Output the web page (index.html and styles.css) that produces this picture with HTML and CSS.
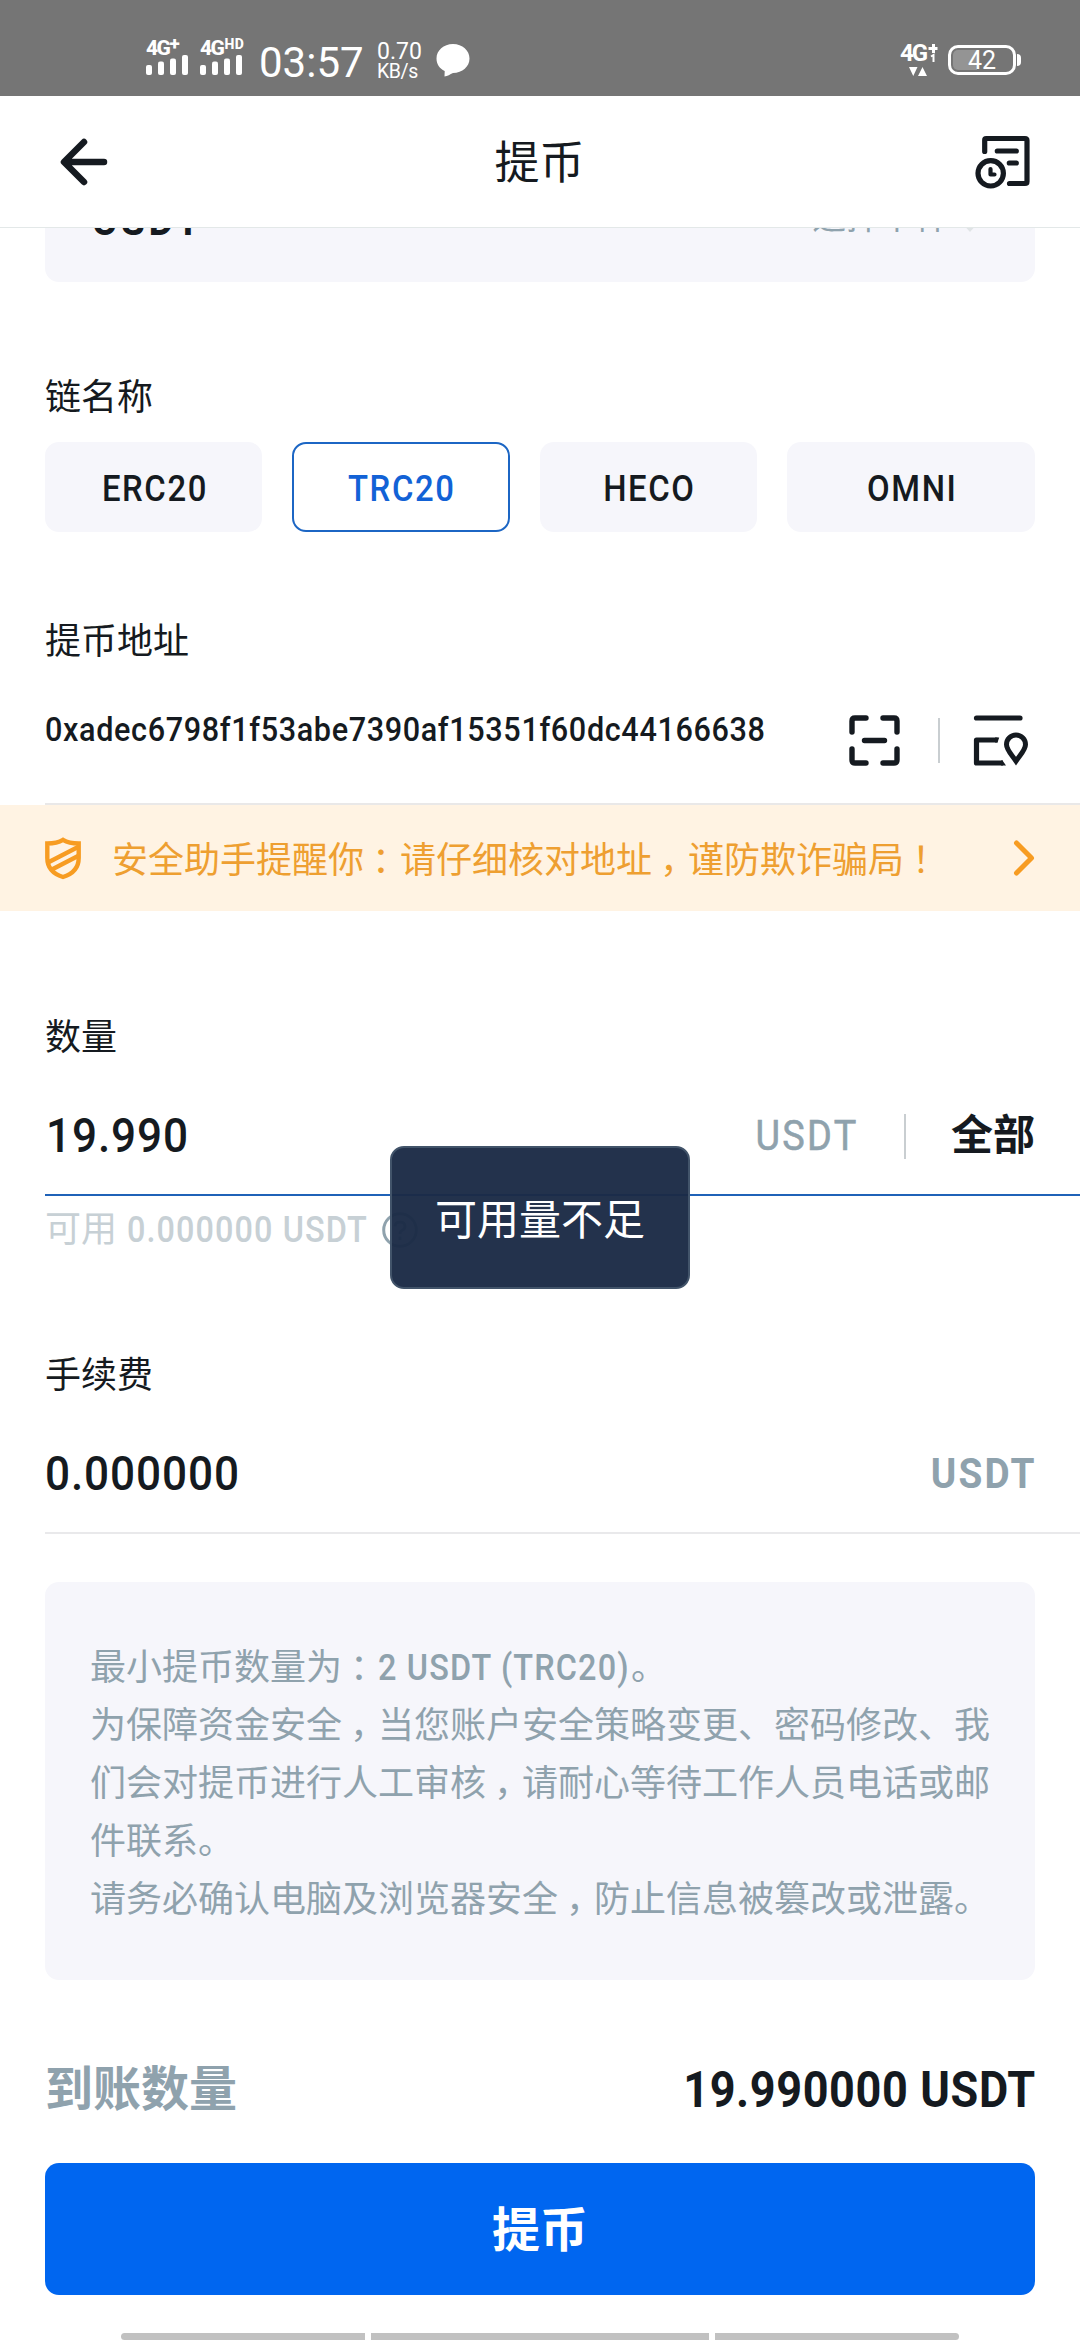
FILE: index.html
```html
<!DOCTYPE html>
<html lang="zh-CN">
<head>
<meta charset="utf-8">
<title>提币</title>
<link rel="stylesheet" href="styles.css">
</head>
<body>
<div class="screen">
  <div class="status">
    <div class="signal">
      <div class="net">4G<span class="plus">+</span></div>
      <svg width="42" height="20" viewBox="0 0 42 20" fill="#fff"><rect y="10" width="6" height="10" rx="2"/><rect x="12" y="6.500" width="6" height="13.500" rx="2"/><rect x="24" y="3.500" width="6" height="16.500" rx="2"/><rect x="36" y="0" width="6" height="20" rx="2"/></svg>
    </div>
    <div class="signal signal-hd">
      <div class="net">4G<span class="hd">HD</span></div>
      <svg width="42" height="20" viewBox="0 0 42 20" fill="#fff"><rect y="10" width="6" height="10" rx="2"/><rect x="12" y="6.500" width="6" height="13.500" rx="2"/><rect x="24" y="3.500" width="6" height="16.500" rx="2"/><rect x="36" y="0" width="6" height="20" rx="2"/></svg>
    </div>
    <div class="clock">03:57</div>
    <div class="speed"><span class="rate">0.70</span><span class="unit">KB/s</span></div>
    <svg class="bubble" width="34" height="33" viewBox="0 0 34 33" fill="#fff"><path d="M17 0C26.500 0 33.500 6.500 33.500 14.500S26.500 29 17 29C14 30.500 11.500 32 8.500 32.500L8.700 27C3.500 24.500 .5 20 .5 14.500C.5 6.500 7.500 0 17 0Z"/></svg>
    <div class="data">
      <div class="data-net">4G<svg width="10" height="19" viewBox="0 0 10 19" fill="none" stroke="#fff"><path d="M.5 4.500H9.500M5.500 0V9" stroke-width="3"/><path d="M3 12.500L5.500 11V18" stroke-width="2"/></svg></div>
      <svg width="18" height="9" viewBox="0 0 18 9" fill="#fff"><path d="M0 0H8.500L4.250 9ZM9 9H18L13.500 0Z"/></svg>
    </div>
    <div class="battery"><span>42</span></div>
    <div class="nub"></div>
  </div>

  <header class="header">
    <svg class="back" width="48" height="48" viewBox="0 0 48 48" fill="none" stroke="#151a20" stroke-width="6.500" stroke-linecap="round" stroke-linejoin="round"><path d="M24 4L4 24L24 44M5 24H44"/></svg>
    <h1>提币</h1>
    <svg class="history" width="56" height="54" viewBox="0 0 56 54" fill="none" stroke="#151a20" stroke-width="5.200" stroke-linecap="round" stroke-linejoin="round"><path d="M9.700 16.500V5Q9.700 3.500 11.200 3.500H50Q52 3.500 52 5.500V46.500Q52 48.500 50 48.500H34.500M22.300 16H41.300M34.300 28H41.300"/><circle cx="15.700" cy="38.300" r="12.700"/><path d="M15.500 34V39.500H19.500" stroke-width="4.200"/></svg>
  </header>

  <main class="page">
    <div class="coin"><span class="coin-name din">USDT</span><span class="coin-pick">选择币种<svg width="20" height="14" viewBox="0 0 20 14" fill="#e0e4e6"><path d="M2 3H18L10 12Z"/></svg></span></div>

    <h2 class="label chain-label">链名称</h2>
    <div class="chains">
      <button class="chain"><span class="din din-center">ERC20</span></button>
      <button class="chain active"><span class="din din-center">TRC20</span></button>
      <button class="chain"><span class="din din-center">HECO</span></button>
      <button class="chain"><span class="din din-center">OMNI</span></button>
    </div>

    <h2 class="label addr-label">提币地址</h2>
    <div class="addr-row">
      <span class="addr"><span class="din">0xadec6798f1f53abe7390af15351f60dc44166638</span></span>
      <svg class="scan" width="51" height="51" viewBox="0 0 51 51" fill="none" stroke="#151a20" stroke-width="5.400" stroke-linecap="round" stroke-linejoin="round"><path d="M3 17V6Q3 3 6 3H17M34 3H45Q48 3 48 6V17M48 34V45Q48 48 45 48H34M17 48H6Q3 48 3 45V34M15.500 25.500H35.500"/></svg>
      <span class="divider"></span>
      <svg class="book" width="56" height="52" viewBox="0 0 56 52" fill="none" stroke="#151a20" stroke-width="5.200"><path d="M3.500 4H47" stroke-linecap="round"/><path d="M24.500 26H3.500V49H30" stroke-linejoin="round"/><path d="M22 23.400H26.200L24.500 28.600H22ZM28 46.400H29.500L33 51.600H28Z" fill="#151a20" stroke="none"/><path d="M43 47C39 41 33.500 36 33.500 30.500A9.500 9.500 0 0 1 52.500 30.500C52.500 36 47 41 43 47Z" stroke-width="5"/></svg>
    </div>

    <div class="notice">
      <svg width="36" height="43" viewBox="0 0 36 43"><defs><clipPath id="shield"><path d="M3 6.500Q12 6.500 18 3.500Q24 6.500 33 6.500V21Q33 35 18 40Q3 35 3 21Z"/></clipPath></defs><path d="M2.300 6.500Q12 6.300 18 2.800Q24 6.300 33.700 6.500V21Q33.700 35 18 40Q2.300 35 2.300 21Z" fill="none" stroke="#f79c22" stroke-width="4.400"/><path clip-path="url(#shield)" d="M2 26L35 9M4 34L35 18" stroke="#f79c22" stroke-width="4.600"/></svg>
      <p>安全助手提醒你<span class="mid">：</span>请仔细核对地址<span class="mid">，</span>谨防欺诈骗局<span class="mid">！</span></p>
      <svg class="go" width="22" height="36" viewBox="0 0 22 36" fill="none" stroke="#f79c22" stroke-width="5" stroke-linecap="round" stroke-linejoin="round"><path d="M3.500 3L18.500 18L3.500 33"/></svg>
    </div>

    <h2 class="label amount-label">数量</h2>
    <div class="field field-active">
      <span class="value value-amount"><span class="din">19.990</span></span>
      <span class="unit-text din din-right">USDT</span>
      <span class="divider"></span>
      <span class="all">全部</span>
    </div>
    <div class="hint">可用 <span class="hint-num"><span class="din">0.000000 USDT</span></span><svg width="36" height="36" viewBox="0 0 36 36" fill="none" stroke="#8fa2ad" stroke-width="3"><circle cx="18" cy="18" r="16.300"/><path d="M13 14.500Q13 10 18 10T23 14.500Q23 17 20 18.500Q18 19.500 18 22M18 24.500V28"/></svg></div>

    <h2 class="label fee-label">手续费</h2>
    <div class="field">
      <span class="value"><span class="din">0.000000</span></span>
      <span class="unit-text unit-bold din din-right">USDT</span>
    </div>

    <div class="info">
      <p>最小提币数量为<span class="mid">：</span><span class="info-min"><span class="din">2 USDT (TRC20)</span></span>。</p>
      <p>为保障资金安全<span class="mid">，</span>当您账户安全策略变更、密码修改、我们会对提币进行人工审核<span class="mid">，</span>请耐心等待工作人员电话或邮件联系。</p>
      <p>请务必确认电脑及浏览器安全<span class="mid">，</span>防止信息被篡改或泄露。</p>
    </div>
  </main>

  <footer class="footer">
    <div class="total"><span class="total-label">到账数量</span><span class="total-value din din-right">19.990000 USDT</span></div>
    <button class="submit">提币</button>
    <div class="navbars"><i></i><i></i><i></i></div>
  </footer>

  <div class="toast">可用量不足</div>
</div>
</body>
</html>
```
FILE: styles.css
```css
* { box-sizing: border-box; margin: 0; padding: 0; }
body {
  width: 1080px;
  height: 2340px;
  background: #fff;
  color: #151a20;
  font-family: Roboto, "Noto Sans CJK SC", sans-serif;
  line-height: 1.2;
  overflow: hidden;
}
button { font: inherit; color: inherit; border: 0; }
svg { display: block; flex: none; }
.screen { position: relative; width: 1080px; height: 2340px; overflow: hidden; }

/* narrow, openly spaced latin text */
.din { display: inline-block; transform: scaleX(.9); transform-origin: 0 50%; white-space: nowrap; }
.din-center { transform-origin: 50% 50%; }
.din-right { transform-origin: 100% 50%; }

/* status bar */
.status {
  height: 96px;
  background: #757575;
  color: #fff;
  display: flex;
  align-items: flex-start;
  padding-left: 146px;
}
.signal { width: 54px; padding-top: 38px; }
.signal-hd { width: 59px; }
.net { display: flex; height: 17px; font-size: 21px; line-height: 20px; font-weight: 800; letter-spacing: -1.5px; }
.plus { font-size: 19px; line-height: 11px; }
.hd { font-size: 14px; line-height: 12px; letter-spacing: .5px; padding-left: 1px; }
.clock { width: 118px; font-size: 42px; line-height: 48px; padding-top: 39px; }
.speed { width: 59px; display: flex; flex-direction: column; padding-top: 40px; }
.rate { font-size: 23px; line-height: 23px; }
.unit { font-size: 19.500px; line-height: 17px; letter-spacing: -.4px; }
.bubble { margin-top: 44px; }
.data { margin-left: 430px; padding-top: 43px; width: 48px; display: flex; flex-direction: column; }
.data-net { display: flex; height: 24px; font-size: 24px; line-height: 21px; font-weight: 700; letter-spacing: -2px; }
.data-net svg { margin: 1px 0 0 2px; }
.data > svg { margin-left: 9px; }
.battery {
  width: 68px;
  height: 30px;
  margin-top: 45px;
  border: 3px solid #fff;
  border-radius: 10px;
  padding: 2px;
}
.battery span {
  display: block;
  height: 20px;
  border-radius: 5px;
  padding-left: 15px;
  background: linear-gradient(90deg, #949494 24px, transparent 24px);
  font-size: 25px;
  line-height: 21px;
}
.nub { width: 4px; height: 12px; margin: 54px 0 0 1px; background: #fff; border-radius: 0 4px 4px 0; }

/* header */
.header {
  height: 132px;
  border-bottom: 1px solid #e3e8e8;
  display: flex;
  align-items: center;
  padding: 0 49px 0 60px;
}
.header h1 { flex: 1; padding: 5px 4px 0 0; text-align: center; font-size: 45px; line-height: 60px; font-weight: 400; }
.history { margin-top: 1px; }

/* form */
.page { display: flex; flex-direction: column; clip-path: inset(0); }
.coin {
  height: 122px;
  margin: -68px 45px 0;
  padding: 0 55px 0 47px;
  background: #f6f6fb;
  border-radius: 14px;
  display: flex;
  align-items: center;
  justify-content: space-between;
}
.coin-name { font-size: 43px; font-weight: 700; letter-spacing: 4px; }
.coin-pick { display: flex; align-items: center; padding-bottom: 7px; font-size: 34px; color: #8fa2ad; }
.coin-pick svg { margin: 19px 0 0 12px; }
.label { height: 48px; padding-left: 45px; font-size: 36px; line-height: 50px; font-weight: 400; }
.chain-label { margin-top: 91px; }
.chains { display: grid; grid-template-columns: 217px 218px 217px 248px; gap: 30px; padding: 0 45px; margin-top: 21px; }
.chain {
  height: 90px;
  border-radius: 14px;
  background: #f6f6fb;
  font-size: 36.500px;
  font-weight: 500;
  letter-spacing: 1.800px;
  padding: 4px 0 0 2px;
}
.active { background: #fff; border: 2px solid #1c66c4; color: #1262d6; }

.addr-label { margin-top: 86px; line-height: 48px; }
.addr-row {
  height: 128px;
  margin: 11px 0 0 45px;
  padding-right: 51px;
  border-bottom: 2px solid #e9e8e8;
  display: flex;
  align-items: center;
}
.addr { width: 803.500px; flex: none; padding-bottom: 22px; font-size: 34px; line-height: 40px; font-weight: 500; letter-spacing: .7px; }
.divider { width: 2px; height: 45px; background: #c9ced1; flex: none; }
.scan { margin-right: 38px; }
.book { margin-left: 33px; }
.notice {
  height: 106px;
  background: #fff3e3;
  display: flex;
  align-items: center;
  padding: 0 45px;
  color: #ee9f31;
}
.notice p { flex: 1; padding-left: 31px; font-size: 36px; line-height: 50px; padding-top: 5px; white-space: nowrap; }
/* full-width punctuation set in the middle of its cell */
.mid { margin-left: .22em; letter-spacing: -.22em; }

.amount-label { margin-top: 102px; }
.field {
  height: 121px;
  margin: 14px 0 0 45px;
  padding: 3px 45px 0 0;
  border-bottom: 2px solid #e9e9eb;
  display: flex;
  align-items: center;
}
.field-active { border-color: #1f62b8; }
.value { flex: 1; font-size: 49px; font-weight: 500; letter-spacing: 1px; }
.value-amount { padding-left: 1px; }
.unit-text { font-size: 42px; font-weight: 400; letter-spacing: 2.600px; margin-right: -2px; color: #8fa2ad; -webkit-text-stroke: .6px #8fa2ad; }
.unit-bold { font-weight: 700; font-size: 43px; letter-spacing: 2.400px; -webkit-text-stroke: 0; }
.field .divider { margin: 0 45px 0 47px; }
.all { font-size: 42px; font-weight: 700; }
.hint {
  height: 48px;
  margin: 10px 0 0 45px;
  display: flex;
  align-items: center;
  font-size: 36px;
  line-height: 48px;
  color: #c7d0d5;
}
.hint-num { margin-left: 10px; width: 248px; font-weight: 500; letter-spacing: 1.200px; }
.hint svg { margin-left: 7px; }
.fee-label { margin-top: 97px; }

.info {
  height: 398px;
  margin: 48px 45px 0;
  padding: 57px 43px 0 45px;
  background: #f6f6fb;
  border-radius: 14px;
  color: #8fa2ad;
  font-size: 36px;
  line-height: 58px;
}
.info-min { display: inline-block; width: 253px; height: 58px; vertical-align: top; font-weight: 500; letter-spacing: 1.300px; }

/* bottom */
.footer { padding: 61px 45px 0; }
.total { height: 96px; padding-top: 2px; display: flex; align-items: center; justify-content: space-between; font-weight: 700; }
.total-label { font-size: 48px; color: #8fa2ad; }
.total-value { font-size: 50px; letter-spacing: .7px; margin-right: -1px; }
.submit {
  display: block;
  width: 990px;
  height: 132px;
  margin-top: 26px;
  padding-top: 4px;
  border-radius: 14px;
  background: #0066f0;
  color: #fff;
  font-size: 48px;
  font-weight: 700;
}
.navbars { display: flex; gap: 6px; margin-top: 38px; padding-left: 76px; }
.navbars i { width: 244px; height: 7px; background: #c1c1c1; }
.navbars i:nth-child(2) { width: 338px; }
.navbars i:first-child { border-radius: 4px 0 0 4px; }
.navbars i:last-child { border-radius: 0 4px 4px 0; }

.toast {
  position: absolute;
  left: 390px;
  top: 1146px;
  width: 300px;
  height: 143px;
  border: 2px solid #42546a;
  border-radius: 14px;
  background: rgba(27, 43, 69, .965);
  color: #fff;
  font-size: 42px;
  line-height: 145px;
  text-align: center;
}
```
